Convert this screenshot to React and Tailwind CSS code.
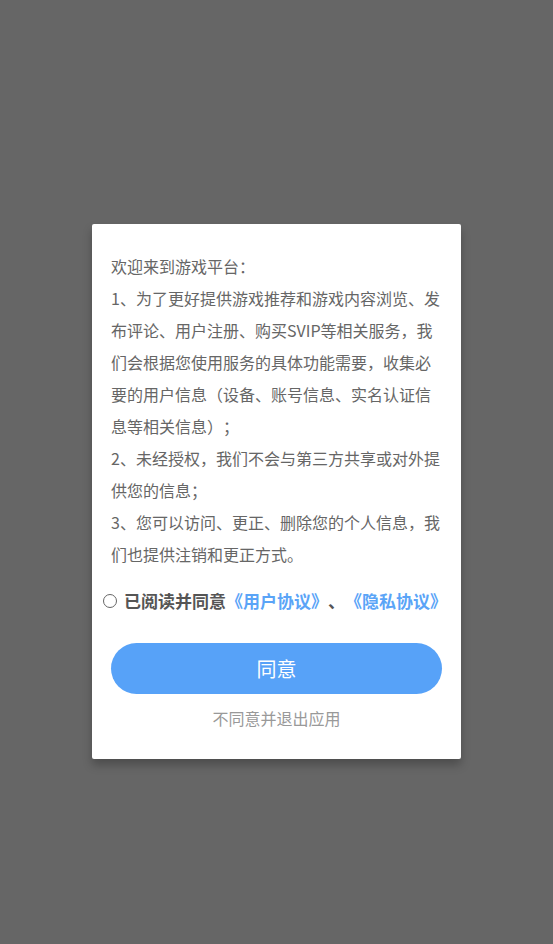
import React from 'react';

const lines = [
  '欢迎来到游戏平台：',
  '1、为了更好提供游戏推荐和游戏内容浏览、发',
  '布评论、用户注册、购买SVIP等相关服务，我',
  '们会根据您使用服务的具体功能需要，收集必',
  '要的用户信息（设备、账号信息、实名认证信',
  '息等相关信息）；',
  '2、未经授权，我们不会与第三方共享或对外提',
  '供您的信息；',
  '3、您可以访问、更正、删除您的个人信息，我',
  '们也提供注销和更正方式。',
];

const App = () => {
  return (
    <div
      className="min-h-[944px] bg-[#666666] pt-[224px] [text-spacing-trim:space-all]"
      style={{ fontFamily: '"Noto Sans CJK SC", "Noto Sans", sans-serif' }}
    >
      <div className="mx-auto w-[369px] rounded-[2px] bg-white px-[19px] pt-[26px] pb-[29px] shadow-[0_6px_10px_rgba(0,0,0,0.25)]">
        {/* 协议内容 */}
        <div className="text-[16px] leading-[32px] text-[#666666]">
          {lines.map((line, i) => (
            <div key={i} className="whitespace-nowrap">{line}</div>
          ))}
        </div>

        <div className="-ml-[8px] mt-[15px] flex h-[32px] items-center whitespace-nowrap">
          <span className="h-[14px] w-[14px] shrink-0 rounded-full border border-[#666666]"></span>
          <span className="ml-[7px] text-[17px] font-bold text-[#555555]">
            已阅读并同意
            <span className="text-[#5aa4f7]">《用户协议》</span>
            、
            <span className="text-[#5aa4f7]">《隐私协议》</span>
          </span>
        </div>

        <button className="mt-[26px] flex h-[51px] w-full items-center justify-center rounded-full bg-[#57a2f8] text-[20px] text-white">
          同意
        </button>

        <div className="mt-[12px] text-center text-[16px] leading-[24px] text-[#999999]">
          不同意并退出应用
        </div>
      </div>
    </div>
  );
};

export default App;
